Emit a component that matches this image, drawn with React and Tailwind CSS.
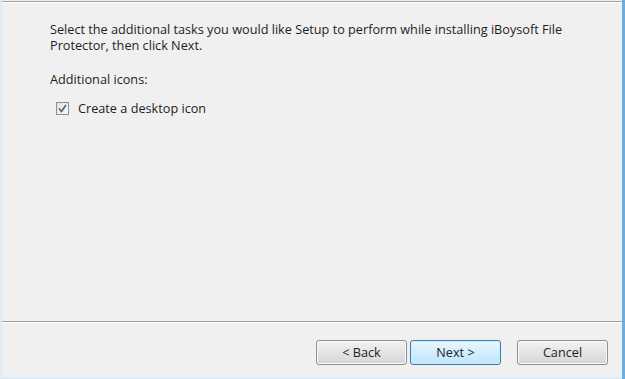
import React from 'react';

const Button = ({ children, primary }) => (
  <button
    className={
      primary
        ? 'w-[91px] h-[25px] rounded-[3px] border border-[#3c7fb1] bg-gradient-to-b from-[#eaf6fd] to-[#bee6fd] text-[12.7px] text-[#222] shadow-[inset_0_0_0_1px_#cfeafc]'
        : 'w-[91px] h-[25px] rounded-[3px] border border-[#8f8f8f] bg-gradient-to-b from-[#f2f2f2] to-[#d6d6d6] text-[12.7px] text-[#222] shadow-[inset_0_0_0_1px_#fafafa]'
    }
  >
    {children}
  </button>
);

export default function App() {
  return (
    <div
      className="w-[625px] h-[379px] flex bg-[#f0f0f0] text-[12.7px] text-[#1e1e1e]"
      style={{ fontFamily: '"Open Sans", "Noto Sans", sans-serif' }}
    >
      <div className="w-[2px] bg-[#dcebf5]" />
      <div className="flex-1 flex flex-col">
        <div className="h-px" />
        <div className="h-px bg-[#a3a3a3]" />
        <div className="h-px bg-white" />
        <div className="flex-1 pl-[48px] pt-[18px] leading-[16px]">
          <p>
            Select the additional tasks you would like Setup to perform while installing iBoysoft File
            <br />
            Protector, then click Next.
          </p>
          <p className="mt-[18px]">Additional icons:</p>
          <label className="mt-[13px] ml-[6px] flex items-center gap-[9px]">
            <span className="w-[13px] h-[13px] border border-[#8f8f8f] bg-gradient-to-br from-[#e2e2e2] to-[#fafafa] flex items-center justify-center">
              <svg width="9" height="9" viewBox="0 0 9 9">
                <path d="M1 4.5 L3.5 7.5 L8 1" fill="none" stroke="#4a5f7a" strokeWidth="1.6" />
              </svg>
            </span>
            Create a desktop icon
          </label>
        </div>
        <div className="h-px bg-[#a0a0a0]" />
        <div className="h-px bg-white" />
        <div className="h-[54px] pt-[17px] flex items-start justify-end pr-[14px]">
          <div className="flex gap-[3px]">
            <Button>&lt; Back</Button>
            <Button primary>Next &gt;</Button>
          </div>
          <div className="w-[16px]" />
          <Button>Cancel</Button>
        </div>
        <div className="h-[2px] bg-[#dcebf5]" />
      </div>
      <div className="w-[3px] bg-[#6aaee0]" />
    </div>
  );
}
